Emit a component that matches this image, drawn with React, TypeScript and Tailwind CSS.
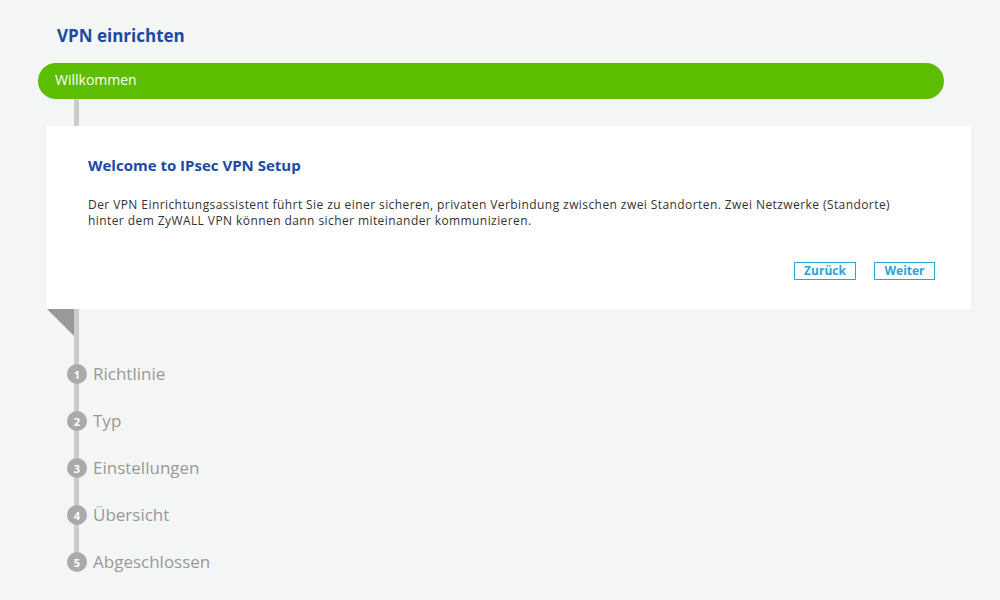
import React from "react";

const steps = ["Richtlinie", "Typ", "Einstellungen", "Übersicht", "Abgeschlossen"];

export default function App() {
  const font = { fontFamily: '"Century Gothic", "Open Sans", "DejaVu Sans", sans-serif' };
  return (
    <div className="w-[1000px] h-[600px] bg-[#f4f5f5] overflow-hidden" style={font}>
      <div className="pt-[25px] pl-[57px] h-[47px] text-[17px] leading-[22px] font-bold text-[#1b49a6]">
        VPN einrichten
      </div>
      <div className="mt-[16px] ml-[38px] w-[906px] h-[36px] rounded-full bg-[#5dbd00] flex items-center pl-[17px] pb-[4px] text-white text-[14px]">
        Willkommen
      </div>
      <div className="ml-[74px] w-[5px] h-[27px] bg-[#cccccc]" />
      <div className="ml-[47px] w-[924px] h-[183px] bg-white pt-[29px] pl-[41px] pr-[36px] flex flex-col">
        <div className="text-[15px] leading-[20px] font-bold text-[#1b49a6]">Welcome to IPsec VPN Setup</div>
        <div className="mt-[22px] text-[12px] leading-[16px] tracking-[0.42px] text-[#333333] whitespace-nowrap">
          Der VPN Einrichtungsassistent führt Sie zu einer sicheren, privaten Verbindung zwischen zwei Standorten. Zwei Netzwerke (Standorte)
          <br />
          hinter dem ZyWALL VPN können dann sicher miteinander kommunizieren.
        </div>
        <div className="mt-[33px] flex justify-end gap-[18px]">
          <button className="w-[62px] h-[18px] border border-[#2ba4dc] text-[#2ba4dc] text-[12px] leading-[16px] font-bold bg-white">Zurück</button>
          <button className="w-[61px] h-[18px] border border-[#2ba4dc] text-[#2ba4dc] text-[12px] leading-[16px] font-bold bg-white">Weiter</button>
        </div>
      </div>
      <div className="relative h-[291px]">
        <div className="absolute left-[74px] top-0 w-[5px] h-[253px] bg-[#cccccc]" />
        <svg className="absolute left-[47px] top-0" width="27" height="27" viewBox="0 0 27 27">
          <polygon points="0,0 27,0 27,27" fill="#999999" />
        </svg>
        <div className="relative pt-[55px] flex flex-col gap-[27px]">
          {steps.map((s, i) => (
            <div key={s} className="flex items-center h-[20px]">
              <div className="ml-[67px] w-[20px] h-[20px] rounded-full bg-[#aaaaaa] text-white text-[11px] font-bold flex items-center justify-center leading-none">
                {i + 1}
              </div>
              <div className="ml-[6px] text-[17px] leading-[20px] text-[#999999]">{s}</div>
            </div>
          ))}
        </div>
      </div>
    </div>
  );
}
